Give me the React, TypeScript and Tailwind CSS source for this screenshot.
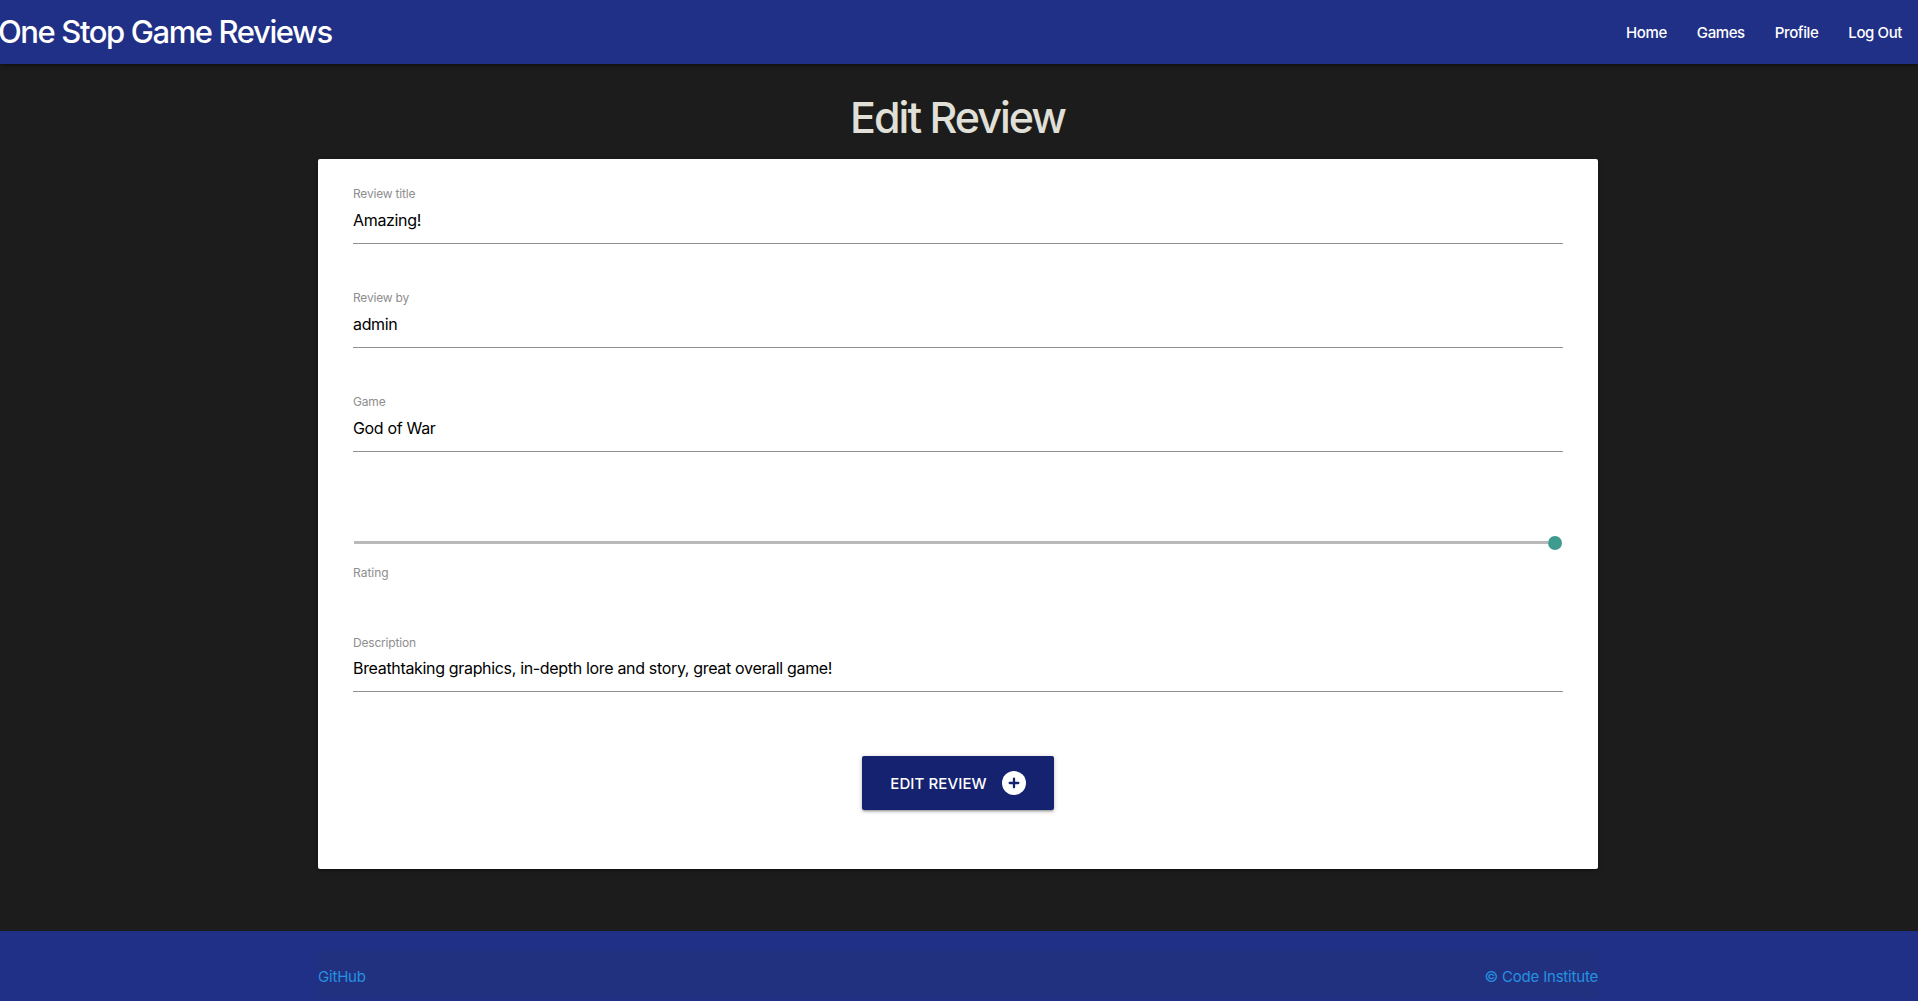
const fields = [
  ["Review title", "Amazing!"],
  ["Review by", "admin"],
  ["Game", "God of War"],
];

function Field({ label, value, compact = false }: { label: string; value: string; compact?: boolean }) {
  return (
    <div className="h-[104px]">
      <div className={`flex flex-col border-b border-[#919191] ${compact ? "h-[56px] gap-[6px]" : "h-[57px] gap-[7px]"}`}>
        <span className="text-[12px] leading-[14px] tracking-[-0.19px] text-[#8e8e8e]">{label}</span>
        <span className="text-[16px] leading-[24px] tracking-[-0.33px] text-black">{value}</span>
      </div>
    </div>
  );
}

export default function App() {
  return (
    <div className="flex h-[1001px] flex-col overflow-hidden bg-[#1c1c1c] font-['Inter',sans-serif]">
      <nav className="flex h-16 shrink-0 items-center justify-between bg-[#203086] text-white shadow-[0_2px_2px_0_rgba(0,0,0,0.14),0_3px_1px_-2px_rgba(0,0,0,0.12),0_1px_5px_0_rgba(0,0,0,0.2)]">
        <a className="-ml-[2px] text-[31px] font-[450] tracking-[-1.4px] whitespace-nowrap">One Stop Game Reviews</a>
        <ul className="flex pt-[2px] text-[15px] font-[450] tracking-[-0.4px]">
          <li className="px-[15px]">Home</li>
          <li className="px-[15px]">Games</li>
          <li className="px-[15px]">Profile</li>
          <li className="pr-[16px] pl-[15px]">Log Out</li>
        </ul>
      </nav>
      <h1 className="mt-[29px] mr-[3px] h-[66px] shrink-0 text-center text-[43px] leading-[48px] font-[450] tracking-[-2px] text-[#e0e0d8]">Edit Review</h1>
      <main className="ml-[318px] h-[710px] w-[1280px] shrink-0 rounded-[2px] bg-white px-[35px] pt-[28px] shadow-[0_2px_2px_0_rgba(0,0,0,0.14),0_3px_1px_-2px_rgba(0,0,0,0.12),0_1px_5px_0_rgba(0,0,0,0.2)]">
        {fields.map(([label, value]) => <Field key={label} label={label} value={value} />)}
        <div className="mt-[37px] flex h-[14px] items-center px-px">
          <div className="-mt-px h-[3px] flex-1 bg-[#b9b9b9]" />
          <div className="size-[14px] rounded-full bg-[#3f9b8f]" />
        </div>
        <div className="h-[86px] pt-[15px] text-[12px] leading-[16px] text-[#8e8e8e]">Rating</div>
        <Field compact label="Description" value="Breathtaking graphics, in-depth lore and story, great overall game!" />
        <div className="mt-[16px] flex justify-center">
          <button className="flex h-[54px] w-[192px] items-center justify-center gap-[15px] rounded-[2px] bg-[#142270] text-[15px] font-medium text-white shadow-[0_2px_2px_0_rgba(0,0,0,0.14),0_3px_1px_-2px_rgba(0,0,0,0.12),0_1px_5px_0_rgba(0,0,0,0.2)]">
            <span className="pt-[2px] tracking-[0.1px]">EDIT REVIEW</span>
            <svg viewBox="0 0 24 24" className="size-6">
              <circle cx="12" cy="12" r="12" fill="white" />
              <path d="M12 7.7v8.6M7.7 12h8.6" stroke="#142270" strokeWidth="2.3" strokeLinecap="round" />
            </svg>
          </button>
        </div>
      </main>
      <footer className="mt-[62px] flex-1 bg-[#203086] pt-[20px]">
        <div className="ml-[318px] flex h-[48px] w-[1280px] justify-between bg-[#22317f] pt-[15px] text-[15px] tracking-[-0.2px] text-[#2492e0]"><a>GitHub</a><a>© Code Institute</a></div>
      </footer>
    </div>
  );
}
